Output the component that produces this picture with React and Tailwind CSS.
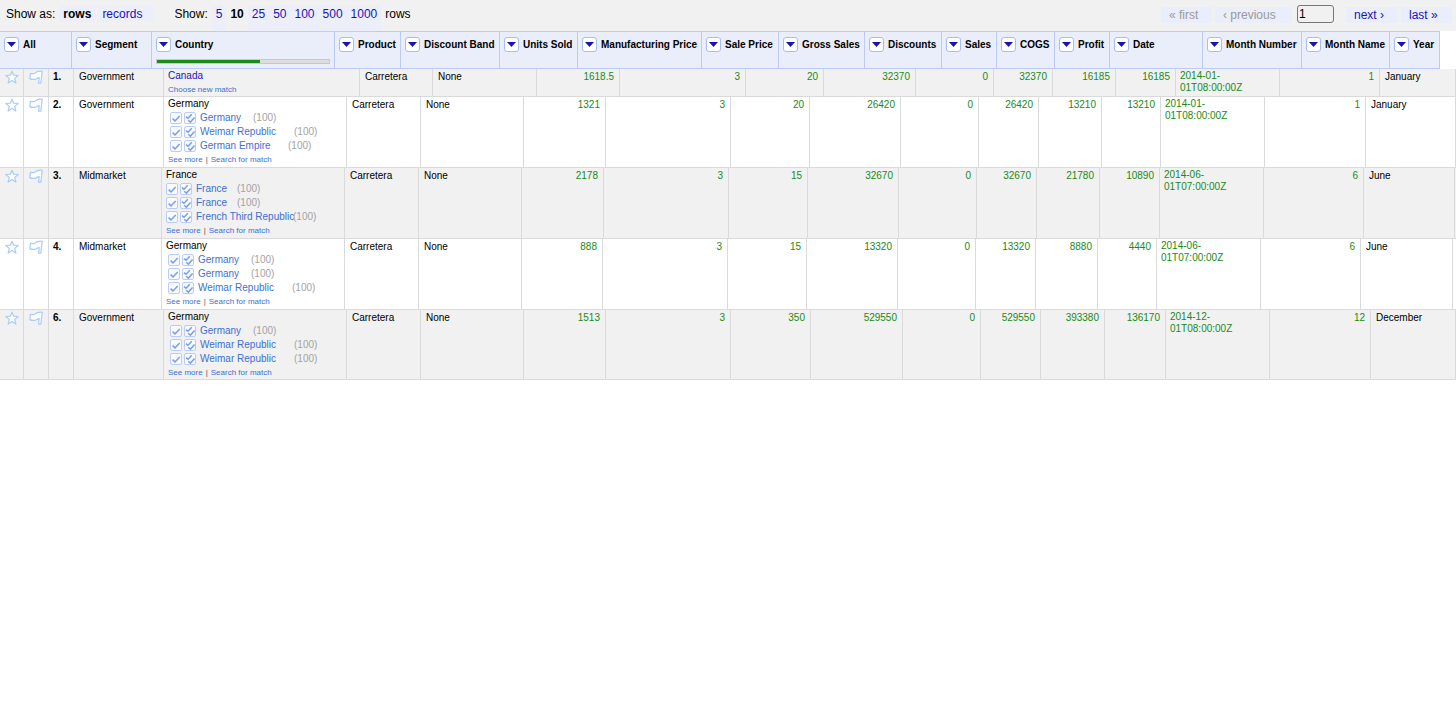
import React, { useState } from 'react'

const columns = [
  'All', 'Segment', 'Country', 'Product', 'Discount Band', 'Units Sold',
  'Manufacturing Price', 'Sale Price', 'Gross Sales', 'Discounts', 'Sales',
  'COGS', 'Profit', 'Date', 'Month Number', 'Month Name', 'Year'
]

const headerGrid = 'grid-cols-[72px_80px_183px_66px_99px_78px_124px_77px_86px_77px_55px_58px_55px_93px_99px_88px_50px]'

const pageSizes = [5, 10, 25, 50, 100, 500, 1000]

// w is the width of the name box, the score follows it
const GERMANY = { name: 'Germany', w: 'w-[53px]' }
const WEIMAR = { name: 'Weimar Republic', w: 'w-[94px]' }
const EMPIRE = { name: 'German Empire', w: 'w-[88px]' }
const FRANCE = { name: 'France', w: 'w-[41px]' }
const THIRD = { name: 'French Third Republic', w: 'w-[97px]' }

const rows = [
  {
    id: 1,
    grid: 'min-h-[28px] grid-cols-[24px_25px_25px_90px_196px_73px_104px_83px_126px_78px_92px_78px_59px_63px_60px_104px_100px_1fr]',
    segment: 'Government',
    country: 'Canada',
    matched: true,
    numbers: ['1618.5', '3', '20', '32370', '0', '32370', '16185', '16185'],
    date: '2014-01-01T08:00:00Z',
    month: 1,
    monthName: 'January'
  },
  {
    id: 2,
    grid: 'min-h-[71px] grid-cols-[24px_25px_25px_90px_183px_74px_103px_82px_125px_79px_91px_78px_60px_63px_59px_104px_101px_1fr]',
    segment: 'Government',
    country: 'Germany',
    candidates: [GERMANY, WEIMAR, EMPIRE],
    indent: 'pl-0.5',
    numbers: ['1321', '3', '20', '26420', '0', '26420', '13210', '13210'],
    date: '2014-01-01T08:00:00Z',
    month: 1,
    monthName: 'January'
  },
  {
    id: 3,
    grid: 'min-h-[71px] grid-cols-[24px_25px_25px_88px_183px_74px_103px_82px_125px_79px_91px_78px_60px_63px_60px_104px_100px_91px]',
    segment: 'Midmarket',
    country: 'France',
    candidates: [FRANCE, FRANCE, THIRD],
    indent: 'pl-0',
    numbers: ['2178', '3', '15', '32670', '0', '32670', '21780', '10890'],
    date: '2014-06-01T07:00:00Z',
    month: 6,
    monthName: 'June'
  },
  {
    id: 4,
    grid: 'min-h-[71px] grid-cols-[24px_25px_25px_88px_183px_74px_103px_81px_125px_79px_91px_78px_60px_62px_59px_104px_100px_92px]',
    segment: 'Midmarket',
    country: 'Germany',
    candidates: [GERMANY, GERMANY, WEIMAR],
    indent: 'pl-0.5',
    numbers: ['888', '3', '15', '13320', '0', '13320', '8880', '4440'],
    date: '2014-06-01T07:00:00Z',
    month: 6,
    monthName: 'June'
  },
  {
    id: 6,
    grid: 'min-h-[69px] grid-cols-[24px_25px_25px_90px_183px_74px_103px_82px_125px_80px_92px_78px_60px_64px_61px_104px_101px_1fr]',
    segment: 'Government',
    country: 'Germany',
    candidates: [GERMANY, WEIMAR, WEIMAR],
    indent: 'pl-0.5',
    numbers: ['1513', '3', '350', '529550', '0', '529550', '393380', '136170'],
    date: '2014-12-01T08:00:00Z',
    month: 12,
    monthName: 'December'
  }
]

const cell = 'border-r border-[#dadada] px-[5px] pt-0.5'

const StarIcon = () => (
  <svg width="14" height="14" viewBox="0 0 14 14" fill="#fdfdff" stroke="#a9cdf8" strokeWidth="1.2" strokeLinejoin="round">
    <path d="M7 1.200 8.700 5.200l4.500.3-3.500 2.900 1.200 4.600L7 10.500 3.100 13l1.200-4.600L.8 5.500l4.500-.3z" />
  </svg>
)

const FlagIcon = () => (
  <svg width="14" height="14" viewBox="0 0 14 14" fill="#fdfdff" stroke="#a9cdf8" strokeWidth="1.2" strokeLinejoin="round">
    <path d="M1.500 3.200C3.500 3.900 5.200 4 6.300 2.900 7.800 1.400 9.500.9 13.200 1.300L11.800 13.200H9.600L10.200 7.600C8.300 7.400 7.600 9.200 5.400 9.400 3.600 9.600 2 9.200.8 8.600z" />
  </svg>
)

const MatchBox = ({ label, double }) => (
  <label className="grid size-3 cursor-pointer">
    <input
      type="checkbox"
      aria-label={label}
      className="col-start-1 row-start-1 size-3 cursor-pointer appearance-none rounded-[2px] border border-[#b9cdf6] bg-[#f8faff]"
    />
    <svg viewBox="0 0 12 12" className="pointer-events-none col-start-1 row-start-1 size-3" fill="none" stroke="#7a9fe6" strokeWidth="1.5">
      {
        double ? (
          <path d="M2 4.600 4 6.300 7.800 2.200M4.200 8.200l2.200 1.900 4.200-4.600" />
        ) : (
          <path d="M2.600 6.600 5 8.900l4.700-5" />
        )
      }
    </svg>
  </label>
)

const CountryCell = ({ row }) => {
  if (row.matched) {
    return (
      <td className="border-r border-[#dadada] pl-1 pt-px">
        <a href="#" className="block w-fit text-[#1a12b8]">{row.country}</a>
        <a href="#" className="mt-0.5 block w-fit text-[8px] leading-3 text-[#3f6fd1]">Choose new match</a>
      </td>
    )
  }

  return (
    <td className="border-r border-[#dadada] pl-1 pt-px">
      <div>{row.country}</div>
      <ul className={`pt-px ${row.indent}`}>
        {
          row.candidates.map((candidate, i) => (
            <li key={i} className="flex h-[14px] items-center whitespace-nowrap">
              <MatchBox label={`Match ${candidate.name} in this cell`} />
              <span className="w-0.5" />
              <MatchBox double label={`Match ${candidate.name} in all identical cells`} />
              <span className={`ml-1 ${candidate.w}`}>
                <a href="#" className="text-[#3f6fd1]">{candidate.name}</a>
              </span>
              <span className="text-[#a3a3a3]">(100)</span>
            </li>
          ))
        }
      </ul>
      <div className="mt-px flex gap-[3px] text-[8px] leading-3">
        <a href="#" className="text-[#3f6fd1]">See more</a>
        <span className="text-[#555]">|</span>
        <a href="#" className="text-[#3f6fd1]">Search for match</a>
      </div>
    </td>
  )
}

const ViewBar = () => {
  const [page, setPage] = useState('1')

  return (
    <div className="flex h-[31px] justify-between bg-[#f1f1f1] pr-1 pl-[6px] text-[12px] leading-4 whitespace-nowrap">
      <div className="flex pt-[6px]">
        <span>Show as:</span>
        <div className="ml-1 flex h-4 gap-[3px]">
          <span className="bg-[#eceffa] px-1 font-bold">rows</span>
          <a href="#" className="bg-[#eceffa] pr-3 pl-1 text-[#1a12b8]">records</a>
        </div>
        <span className="ml-5">Show:</span>
        <div className="mx-1 flex">
          {
            pageSizes.map((size) => (
              size === 10 ? (
                <span key={size} className="px-1 font-bold">{size}</span>
              ) : (
                <a key={size} href="#" className="bg-[#eceffa] px-1 text-[#1a12b8]">{size}</a>
              )
            ))
          }
        </div>
        <span>rows</span>
      </div>
      <div className="flex items-start pt-[5px]">
        <button disabled className="mt-0.5 mr-[3px] h-4 w-[51px] bg-[#eaedfa] pl-2 text-left text-[#9a9a9a]">« first</button>
        <button disabled className="mt-0.5 mr-[5px] h-4 w-[77px] bg-[#eaedfa] pl-2 text-left text-[#9a9a9a]">‹ previous</button>
        <input
          type="text"
          aria-label="Page"
          value={page}
          onChange={(e) => setPage(e.target.value)}
          className="mr-3 h-[18px] w-[37px] rounded-[3px] border border-[#767676] bg-[#f1f1f1] px-px"
        />
        <button className="mt-0.5 mr-[3px] h-4 w-[52px] cursor-pointer bg-[#eaedfa] pl-2 text-left text-[#1a12b8]">next ›</button>
        <button className="mt-0.5 h-4 w-[51px] cursor-pointer bg-[#eaedfa] pl-2 text-left text-[#1a12b8]">last »</button>
      </div>
    </div>
  )
}

const App = () => {
  return (
    <main className="min-h-screen overflow-x-hidden bg-white font-['Liberation_Sans',Arial,sans-serif] text-black">
      <ViewBar />
      <table className="block text-[10px] leading-3">
        <thead className="block">
          <tr className={`grid h-[38px] w-fit border-y border-[#bccbf3] bg-[#eaedfa] ${headerGrid}`}>
            {
              columns.map((name) => (
                <th key={name} scope="col" className="border-r border-[#bccbf3] px-1 pt-[5px] text-left font-bold">
                  <div className="flex items-center gap-1 whitespace-nowrap">
                    <button
                      aria-label={`${name} menu`}
                      className="flex size-[15px] shrink-0 cursor-pointer items-center justify-center rounded-[3px] border border-[#a9bdf2] bg-white"
                    >
                      <svg width="9" height="5" viewBox="0 0 9 5" fill="#1a12b8">
                        <path d="M0 0h9L4.500 5z" />
                      </svg>
                    </button>
                    <span>{name}</span>
                  </div>
                  {
                    name === 'Country' && (
                      <div className="mt-[7px] h-[5px] border border-[#c8c8c8] bg-[#dedede]">
                        <div className="h-full w-[60%] bg-[#1e8a1e]" />
                      </div>
                    )
                  }
                </th>
              ))
            }
          </tr>
        </thead>
        <tbody className="block">
          {
            rows.map((row) => (
              <tr key={row.id} className={`grid border-b border-[#dadada] odd:bg-[#f1f1f1] ${row.grid}`}>
                <td className="border-r border-[#dadada] pt-px pl-[5px]">
                  <button aria-label="Star row" className="block cursor-pointer"><StarIcon /></button>
                </td>
                <td className="border-r border-[#dadada] pt-px pl-[5px]">
                  <button aria-label="Flag row" className="block cursor-pointer"><FlagIcon /></button>
                </td>
                <td className="border-r border-[#dadada] px-1 pt-0.5 font-bold">{row.id}.</td>
                <td className={cell}>{row.segment}</td>
                <CountryCell row={row} />
                <td className={cell}>Carretera</td>
                <td className={cell}>None</td>
                {
                  row.numbers.map((value, i) => (
                    <td key={i} className={`${cell} text-right text-[#188a18]`}>{value}</td>
                  ))
                }
                <td className="border-r border-[#dadada] px-1 pt-px text-[#188a18]">{row.date}</td>
                <td className={`${cell} text-right text-[#188a18]`}>{row.month}</td>
                <td className={cell}>{row.monthName}</td>
              </tr>
            ))
          }
        </tbody>
      </table>
    </main>
  )
}

export default App
